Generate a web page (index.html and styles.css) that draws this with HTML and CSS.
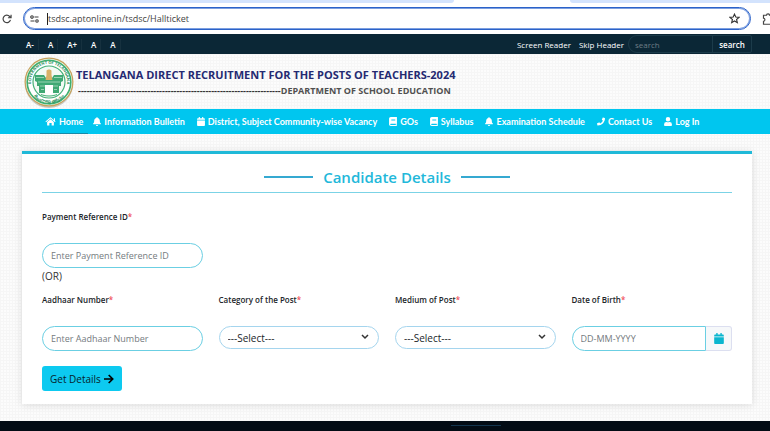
FILE: index.html
```html
<!DOCTYPE html>
<html lang="en">
<head>
    <meta charset="UTF-8">
    <meta name="viewport" content="width=device-width, initial-scale=1">
    <title>Hallticket</title>
    <link rel="stylesheet" href="styles.css">
</head>
<body>
    <svg class="sprite" aria-hidden="true">
        <symbol id="home" viewBox="0 0 18 16"><path d="M9 3.800 3 9v5.500c0 .5.3.8.8.8H7v-4.600h4v4.600h3.200c.5 0 .8-.3.8-.8V9z"/><path d="M9 .6 15 5.600V2h2v5.300l1 .8-1 1.200L9 2.700 1 9.300 0 8.100z"/></symbol>
        <symbol id="bell" viewBox="0 0 14 16"><path d="M7 16a2 2 0 0 0 2-2H5a2 2 0 0 0 2 2zM13.700 11.300C13.100 10.700 12 9.700 12 6.500 12 4.100 10.300 2.100 8 1.700V1a1 1 0 0 0-2 0v.7C3.700 2.100 2 4.100 2 6.500c0 3.200-1.100 4.200-1.700 4.800-.7.700-.2 1.700.7 1.700h12c.9 0 1.400-1 .7-1.700z"/></symbol>
        <symbol id="calendar" viewBox="0 0 14 16"><path d="M0 6h14v8.500c0 .8-.7 1.500-1.500 1.500h-11C.7 16 0 15.300 0 14.500zM14 5V3.500c0-.8-.7-1.500-1.500-1.500H11V.4c0-.2-.2-.4-.4-.4H9.400c-.2 0-.4.200-.4.400V2H5V.4C5 .2 4.800 0 4.600 0H3.400c-.2 0-.4.200-.4.400V2H1.500C.7 2 0 2.700 0 3.500V5z"/></symbol>
        <symbol id="book" viewBox="0 0 14 16"><path fill-rule="evenodd" d="M14 11.200V.8c0-.5-.3-.8-.8-.8H3C1.300 0 0 1.300 0 3v10c0 1.700 1.300 3 3 3h10.200c.5 0 .8-.3.8-.7 0-.4-.1-.6-.3-.8-.1-.5-.1-1.900 0-2.400.2-.3.3-.5.3-.9zM4 4h7v1H4zm0 2h7v1H4zm8 8H3c-1.300 0-1.300-2 0-2h9z"/></symbol>
        <symbol id="phone" viewBox="0 0 16 16"><path d="m15.400.8-3.200-.8c-.4-.1-.7.100-.9.400L9.800 3.900c-.1.300 0 .7.200.9l1.900 1.500a11.600 11.600 0 0 1-5.500 5.500L4.800 10c-.2-.3-.6-.4-.9-.2L.5 11.300c-.4.200-.6.500-.5.900l.8 3.200c.1.400.4.600.7.600C9.500 16 16 9.500 16 1.500c0-.3-.2-.6-.6-.7z"/></symbol>
        <symbol id="user" viewBox="0 0 14 16"><path d="M7 8a4 4 0 1 0 0-8 4 4 0 0 0 0 8zm2.800 1h-.5a5.500 5.500 0 0 1-4.600 0h-.5A4.200 4.200 0 0 0 0 13.200v1.300c0 .8.700 1.500 1.500 1.500h11c.8 0 1.500-.7 1.500-1.500v-1.300A4.200 4.200 0 0 0 9.800 9z"/></symbol>
    </svg>

    <div class="browser">
        <div class="tabstrip"><span class="tab-left"></span><span class="tab-right"></span></div>
        <div class="toolbar">
            <button class="tool" aria-label="Reload"><svg width="10" height="10" viewBox="0 0 16 16"><path d="M13.500 9.500A6 6 0 1 1 12.300 4L14 5.800M14.500 1v5h-5" fill="none" stroke="#444" stroke-width="1.900"/></svg></button>
            <div class="omnibox">
                <svg width="9" height="8" viewBox="0 0 18 16" fill="none" stroke="#3c3c3c" stroke-width="2.200"><circle cx="4" cy="4" r="2.500"/><path d="M9 4h8M1 12h8"/><circle cx="14" cy="12" r="2.500"/></svg>
                <input class="url" type="text" aria-label="Address" value="tsdsc.aptonline.in/tsdsc/Hallticket">
                <svg width="11" height="11" viewBox="0 0 16 16"><path d="m8 1.600 1.900 4.300 4.700.4-3.600 3.100 1.100 4.600L8 11.500 3.900 14 5 9.400 1.400 6.300l4.700-.4z" fill="none" stroke="#333" stroke-width="1.600"/></svg>
            </div>
            <svg class="puzzle" width="12" height="12" viewBox="0 0 16 16"><path d="M2 3h4c0-2.500 4-2.500 4 0h4v4c2 0 2 4 0 4v4H2v-4c2.500 0 2.500-4 0-4z" fill="none" stroke="#444" stroke-width="1.600"/></svg>
        </div>
    </div>

    <div class="topbar">
        <div class="sizes">
            <a href="#">A-</a><a href="#">A</a><a href="#">A+</a><a href="#">A</a><a href="#">A</a>
        </div>
        <div class="access">
            <a href="#">Screen Reader</a>
            <a href="#">Skip Header</a>
            <form class="search">
                <input type="search" placeholder="search" aria-label="search">
                <button type="button">search</button>
            </form>
        </div>
    </div>

    <header class="header">
        <svg class="emblem" width="52" height="54" viewBox="0 0 52 54">
            <circle cx="26" cy="29" r="24" fill="#c9c9c5"/>
            <circle cx="26" cy="27" r="24.500" fill="#c6a25c"/>
            <circle cx="26" cy="27" r="23.200" fill="#eef7ee"/>
            <circle cx="26" cy="27" r="21.800" fill="#fff" stroke="#3fae6f" stroke-width="1.600"/>
            <circle cx="26" cy="27" r="16" fill="#f3faf5" stroke="#45b078" stroke-width="1.200"/>
            <path id="ring-top" d="M8.500 31A18 18 0 1 1 43.500 31" fill="none"/>
            <path id="ring-low" d="M7 35A20.500 20.500 0 0 0 45 35" fill="none"/>
            <text class="ring"><textPath href="#ring-top" startOffset="50%" text-anchor="middle">GOVERNMENT OF TELANGANA</textPath></text>
            <text class="ring"><textPath href="#ring-low" startOffset="50%" text-anchor="middle">తెలంగాణ ప్రభుత్వము</textPath></text>
            <path d="M12 20h9l2 3h6l2-3h9v6l-2 1v4h-2v7h-6v-8h-8v8h-6v-7h-2v-4l-2-1z" fill="#3fa873"/>
            <path d="M13 22.500h8M31 22.500h8M15 27h22M17 31h5M30 31h5M18 34.500h3M31 34.500h3" stroke="#bfe5cf" stroke-width=".7"/>
            <path d="M23.500 16c0-2 5-2 5 0v4l1 5h-7l1-5z" fill="#d8b068"/>
            <path d="M22 30h8v10h-8z" fill="#fff"/>
            <path d="M18 39.500c5 2 11 2 16 0" fill="none" stroke="#45b078"/>
        </svg>
        <div class="heading">
            <h1>TELANGANA DIRECT RECRUITMENT FOR THE POSTS OF TEACHERS-2024</h1>
            <p>----------------------------------------------------------------------<span>DEPARTMENT OF SCHOOL EDUCATION</span></p>
        </div>
    </header>

    <nav class="nav">
        <a class="active" href="#"><svg class="wide"><use href="#home"/></svg>Home</a>
        <a href="#"><svg><use href="#bell"/></svg>Information Bulletin</a>
        <a href="#"><svg><use href="#calendar"/></svg>District, Subject Community-wise Vacancy</a>
        <a href="#"><svg><use href="#book"/></svg>GOs</a>
        <a href="#"><svg><use href="#book"/></svg>Syllabus</a>
        <a href="#"><svg><use href="#bell"/></svg>Examination Schedule</a>
        <a href="#"><svg><use href="#phone"/></svg>Contact Us</a>
        <a href="#"><svg><use href="#user"/></svg>Log In</a>
    </nav>

    <main>
        <form class="card">
            <h2>Candidate Details</h2>
            <div class="grid">
                <div class="field">
                    <label for="payref">Payment Reference ID<b>*</b></label>
                    <input id="payref" type="text" placeholder="Enter Payment Reference ID">
                </div>
            </div>
            <p class="or">(OR)</p>
            <div class="grid">
                <div class="field">
                    <label for="aadhaar">Aadhaar Number<b>*</b></label>
                    <input id="aadhaar" type="text" placeholder="Enter Aadhaar Number">
                </div>
                <div class="field">
                    <label for="category">Category of the Post<b>*</b></label>
                    <div class="select">
                        <select id="category"><option>---Select---</option></select>
                        <svg width="8" height="6" viewBox="0 0 8 6"><path d="m1 1 3 3 3-3"/></svg>
                    </div>
                </div>
                <div class="field">
                    <label for="medium">Medium of Post<b>*</b></label>
                    <div class="select">
                        <select id="medium"><option>---Select---</option></select>
                        <svg width="8" height="6" viewBox="0 0 8 6"><path d="m1 1 3 3 3-3"/></svg>
                    </div>
                </div>
                <div class="field">
                    <label for="dob">Date of Birth<b>*</b></label>
                    <div class="date">
                        <input id="dob" type="text" placeholder="DD-MM-YYYY">
                        <button type="button" aria-label="Pick a date"><svg><use href="#calendar"/></svg></button>
                    </div>
                </div>
            </div>
            <button class="submit" type="button">Get Details <svg width="10" height="10" viewBox="0 0 10 10"><path d="M0 5h8.500M4.700 1 8.700 5l-4 4"/></svg></button>
        </form>
    </main>

    <footer><span></span></footer>
</body>
</html>
```
FILE: styles.css
```css
*{box-sizing: border-box; margin: 0; padding: 0;}
body{
    font-family: "Open Sans", "Noto Sans", sans-serif; font-size: 9px; color: #212529; min-height: 100vh;
    display: flex; flex-direction: column; background-color: #fcfcfc;
    background-image: linear-gradient(#f6f6f6 1px, transparent 1px), linear-gradient(90deg, #f6f6f6 1px, transparent 1px);
    background-size: 3px 3px;
}
a{color: inherit; text-decoration: none;}
input, select, button{font: inherit; color: inherit; outline: none;}
.sprite{position: absolute; width: 0; height: 0;}

/* browser bar */
.browser{background: #fff;}
.tabstrip{display: flex; justify-content: space-between; height: 3px;}
.tab-left{width: 59%; background: #d3e3fd; border-bottom-right-radius: 3px;}
.tab-right{width: 26%; background: #d3e3fd; border-bottom-left-radius: 3px;}
.toolbar{display: flex; align-items: center; gap: 11px; height: 31px; padding-left: 2px; overflow: hidden;}
.tool{display: flex; border: 0; background: none;}
.omnibox{flex: 1; display: flex; align-items: center; gap: 8px; height: 23px; padding: 0 10px 0 6px; border: 1px solid #2b62c9; box-shadow: inset 0 0 0 1px #7c9fe0; border-radius: 12px;}
.url{flex: 1; border: 0; border-left: 1px solid #222; height: 12px; font-size: 9px; color: #444; background: none;}
.puzzle{flex: none; margin-right: -4px;}

/* accessibility bar */
.topbar{display: flex; justify-content: space-between; height: 20px; padding: 0 18px 0 21px; background: #0b2736; color: #fff;}
.sizes, .access{display: flex; align-items: center;}
.sizes a{padding: 0 4px 0 5px; margin-right: 4px; border-right: 1px solid #16313f; font-weight: 600; font-size: 8px;}
.access{font-size: 8px; gap: 8px;}
.search{display: flex; height: 18px; margin-left: -4px; border: 1px solid #1c3b4a; border-radius: 9px 2px 2px 9px;}
.search input{width: 83px; padding: 0 6px; border: 0; background: none;}
.search input::placeholder{color: #6d7d86;}
.search button{width: 39px; border: 0; border-left: 1px solid #1c3b4a; background: none; font-weight: 600;}

/* title */
.header{display: flex; align-items: center; height: 55px; padding-left: 23px;}
.emblem{flex: none;}
.ring{font-size: 4px; font-weight: 700; fill: #2d8f5c;}
.heading{padding: 2px 0 0 1px; white-space: nowrap;}
.heading h1{font-size: 11px; line-height: 16px; font-weight: 700; color: #252a72;}
.heading p{padding-left: 2px; font-size: 9px; line-height: 16px; font-weight: 700; color: #333;}
.heading span{color: #505050;}

/* menu */
.nav{display: flex; gap: 12px; height: 25px; padding-left: 40px; background: #00c6ef; color: #fff; font-family: Lato, sans-serif; font-weight: 700; white-space: nowrap;}
.nav a{display: flex; align-items: center; gap: 3px;}
.nav svg{width: 8px; height: 9px; fill: #fff;}
.nav .wide{width: 11px;}
.nav .active{padding: 0 5px; margin-right: -7px; border-bottom: 1px solid #168aa8;}

/* form */
main{padding: 17px 18px 17px 22px;}
.card{padding: 12px 20px 13px; background: #fff; border-top: 3px solid #20b9d8; box-shadow: 0 1px 8px rgba(0,0,0,0.12);}
.card h2{display: flex; align-items: center; justify-content: center; gap: 10px; height: 27px; padding-bottom: 5px; margin-bottom: 16px; border-bottom: 1px solid #7bd3e6; font-size: 15px; font-weight: 600; color: #22b8da;}
.card h2::before, .card h2::after{content: ""; width: 49px; height: 2px; background: #35a9d1;}
.grid{display: grid; grid-template-columns: repeat(4, 1fr); gap: 16px;}
.field label{display: block; height: 34px; line-height: 16px; font-size: 8px; font-weight: 600;}
.field b{color: #f0525c; font-weight: 600;}
.field input{display: block; width: 100%; height: 25px; padding: 0 8px; border: 1px solid #6bcfe3; border-radius: 13px; background: #fff;}
.field input::placeholder{color: #757b80;}
.or{height: 24px; line-height: 16px; font-size: 10px; color: #333;}
.select{position: relative;}
.select select{display: block; width: 100%; height: 23px; padding: 0 8px; border: 1px solid #a5d5ee; border-radius: 12px; background: #fff; font-size: 10px; appearance: none;}
.select svg{position: absolute; right: 10px; top: 8px; fill: none; stroke: #333; stroke-width: 1.5; pointer-events: none;}
.date{display: flex;}
.date input{flex: 1; min-width: 0;}
.field .date input{border-radius: 13px 0 0 13px;}
.date button{display: flex; align-items: center; justify-content: center; width: 26px; border: 1px solid #dcdff0; border-left: 0; border-radius: 0 3px 3px 0; background: #f6f8fa;}
.date svg{width: 10px; height: 11px; fill: #0bb6cf;}
.submit{display: flex; align-items: center; gap: 3px; height: 25px; margin-top: 15px; padding: 0 8px; border: 0; border-radius: 3px; background: #0dcaf0; font-size: 10px; color: #07222a; white-space: nowrap;}
.submit svg{fill: none; stroke: #000; stroke-width: 1.7;}

footer{flex: 1; min-height: 10px; padding: 4px 35% 0 0; background: #020b14;}
footer span{display: block; width: 50px; height: 1px; margin-left: auto; background: #12344d;}
```
